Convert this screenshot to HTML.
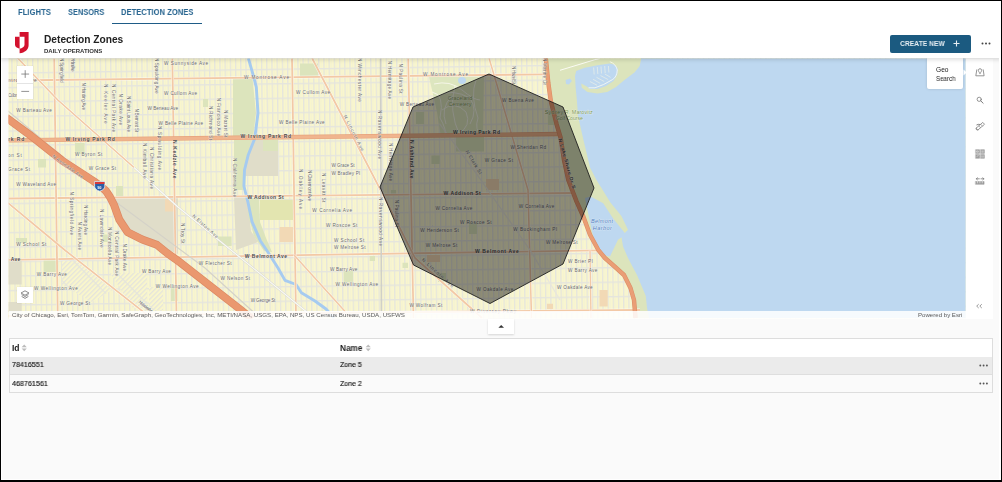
<!DOCTYPE html>
<html><head><meta charset="utf-8">
<style>
.t{will-change:transform;}
html,body{margin:0;padding:0;width:1002px;height:482px;overflow:hidden;background:#000;font-family:"Liberation Sans",sans-serif;}
.abs{position:absolute;}
#frame{position:absolute;left:1px;top:1px;width:1000px;height:479px;background:#fff;}
#content{position:absolute;left:2px;top:1px;width:997px;height:478px;background:#fafafa;overflow:hidden;}
.t{position:absolute;white-space:nowrap;transform-origin:0 0;line-height:1;}
#header{position:absolute;left:0;top:0;width:1002px;height:58px;background:#fff;box-shadow:0 2px 4px rgba(0,0,0,0.13);z-index:3;}
.tab{color:#286590;font-weight:bold;font-size:9px;}
#uline{position:absolute;left:112.4px;top:22.5px;width:89.6px;height:1.9px;background:#1f5c87;}
#btn{position:absolute;left:890px;top:34.7px;width:81px;height:18px;background:#1b5a80;border-radius:2px;}
#map{position:absolute;left:0;top:0;width:1002px;height:482px;z-index:1;}
#toolbar{position:absolute;left:965.5px;top:58.5px;width:27.5px;height:260px;background:#fff;z-index:2;}
#tip{position:absolute;left:927.2px;top:57.8px;width:36.3px;height:31.1px;background:#fff;border-radius:0 0 2px 2px;box-shadow:0 0 3px rgba(0,0,0,0.15);z-index:2;}
#tbl{position:absolute;left:9px;top:338.4px;width:983px;height:54px;border:0.8px solid #dcdcdc;background:#fafafa;box-sizing:border-box;z-index:2;}
.row{position:absolute;left:0;width:100%;}
.lbl text{font-family:"Liberation Sans",sans-serif;paint-order:stroke;stroke:rgba(255,255,255,0.55);stroke-width:0.7px;}
</style></head>
<body>
<div id="frame"></div>
<div style="position:absolute;left:0;top:0;width:1002px;height:482px;box-sizing:border-box;border-style:solid;border-color:#000;border-width:1px 1px 2px 1px;z-index:100;pointer-events:none"></div>
<div style="position:absolute;left:999px;top:0;width:2px;height:482px;background:#fff;z-index:99"></div>
<div style="position:absolute;left:0;top:479px;width:1002px;height:1px;background:#fff;z-index:99"></div>
<div id="content"></div>

<div id="header">
  <span class="t tab" style="left:17.6px;top:8.2px;transform:scaleX(0.855)">FLIGHTS</span>
  <span class="t tab" style="left:67.5px;top:8.2px;transform:scaleX(0.825)">SENSORS</span>
  <span class="t tab" style="left:120.8px;top:8.2px;transform:scaleX(0.847)">DETECTION ZONES</span>
  <div id="uline"></div>
  <svg class="abs" style="left:15.4px;top:32.4px" width="14" height="22" viewBox="0 0 14 22">
    <path fill="#d3112e" d="M4.6,0 H13.6 V13.2 C13.6,17.5 9.9,20.6 4.6,21.3 V16.7 C7.2,16.2 9.5,15 9.5,12.8 V4.7 H4.6 Z"/>
    <path fill="#d3112e" d="M0,4.7 H4.6 V16.7 C2,16.2 0,14.8 0,12.8 Z"/>
  </svg>
  <span class="t" style="left:44.1px;top:34.5px;font-size:10.2px;font-weight:bold;color:#222;">Detection Zones</span>
  <span class="t" style="left:44.1px;top:47.6px;font-size:6px;font-weight:bold;color:#333;">DAILY OPERATIONS</span>
  <div id="btn"></div>
  <span class="t" style="left:900.1px;top:39.8px;font-size:7.5px;font-weight:bold;color:#e6edf2;transform:scaleX(0.9)">CREATE NEW</span>
  <svg class="abs" style="left:952.5px;top:40px" width="7" height="7"><path d="M3.5,0.5V6.5M0.5,3.5H6.5" stroke="#e6edf2" stroke-width="1.1"/></svg>
  <svg class="abs" style="left:981px;top:42px" width="11" height="3"><circle cx="1.5" cy="1.4" r="1" fill="#444"/><circle cx="5" cy="1.4" r="1" fill="#444"/><circle cx="8.5" cy="1.4" r="1" fill="#444"/></svg>
</div>

<svg id="map" width="1002" height="482" viewBox="0 0 1002 482">
<defs>
<clipPath id="mc"><rect x="8.6" y="58.5" width="957" height="260"/></clipPath>
<pattern id="grid" patternUnits="userSpaceOnUse" width="5.2" height="14.5" patternTransform="rotate(-0.8)">
<rect x="0" y="0" width="1.3" height="14.5" fill="#e5e5dd"/><rect x="0" y="0" width="5.2" height="1.4" fill="#e5e5dd"/><rect x="3.1" y="1.4" width="0.45" height="13.1" fill="#efeed9"/>
</pattern>
<pattern id="dgrid" patternUnits="userSpaceOnUse" width="3.3" height="22" patternTransform="rotate(45)">
<rect x="0" y="0" width="3.3" height="22" fill="#f9f6cd"/><rect x="0" y="0" width="1.2" height="22" fill="#e4e4dc"/><rect x="0" y="0" width="3.3" height="1.2" fill="#e4e4dc"/>
</pattern>
</defs>
<g clip-path="url(#mc)">
<rect x="0" y="0" width="1002" height="482" fill="#f9f6cd"/>
<rect x="0" y="0" width="1002" height="482" fill="url(#grid)"/>
<polygon points="62.0,261.0 79.0,261.0 112.0,290.0 92.0,302.0 62.0,285.0" fill="url(#dgrid)"/>
<polygon points="110.0,273.0 147.0,273.0 147.0,308.0 133.0,308.0" fill="url(#dgrid)"/>
<polygon points="149.0,287.0 163.0,287.0 163.0,310.0 149.0,310.0" fill="url(#dgrid)"/>
<polygon points="110.0,197.0 178.0,197.0 178.0,254.0 153.0,243.5 136.7,236.6 125.7,227.0 117.5,213.4" fill="#e0ddc9"/>
<polygon points="245.0,140.0 278.0,140.0 278.0,176.0 245.0,176.0" fill="#e0ddc9"/>
<polygon points="8.0,258.5 21.7,258.5 21.7,284.5 8.0,284.5" fill="#e0ddc9"/>
<polygon points="8.0,302.0 21.7,302.0 21.7,312.0 8.0,312.0" fill="#e0ddc9"/>
<polygon points="234.0,197.0 247.5,197.0 251.0,231.0 258.0,242.0 236.0,250.0" fill="#e0ddc9"/>
<polygon points="170.0,208.0 175.5,208.0 175.5,249.0 170.0,249.0" fill="#e0ddc9"/>
<polygon points="233.0,78.5 252.5,78.5 256.0,113.0 253.0,137.4 233.0,137.4" fill="#dce4bc"/>
<polygon points="234.0,140.0 251.0,140.0 246.0,165.0 245.0,190.0 234.0,190.0" fill="#dce4bc"/>
<polygon points="300.0,63.5 318.0,63.5 318.0,76.6 300.0,76.6" fill="#dce4bc"/>
<polygon points="263.0,140.0 278.0,140.0 278.0,151.0 263.0,151.0" fill="#dce4bc"/>
<polygon points="75.0,143.0 84.6,143.0 84.6,154.0 75.0,154.0" fill="#dce4bc"/>
<polygon points="38.0,159.0 46.0,159.0 46.0,167.5 38.0,167.5" fill="#dce4bc"/>
<polygon points="43.6,260.0 58.6,260.0 58.6,272.0 43.6,272.0" fill="#dce4bc"/>
<polygon points="16.0,238.0 27.0,238.0 27.0,243.0 16.0,243.0" fill="#dce4bc"/>
<polygon points="116.0,186.0 123.0,186.0 123.0,197.0 116.0,197.0" fill="#dce4bc"/>
<polygon points="171.0,287.0 178.0,287.0 178.0,301.0 171.0,301.0" fill="#dce4bc"/>
<polygon points="218.0,236.6 231.6,236.6 231.6,246.0 218.0,246.0" fill="#dce4bc"/>
<polygon points="343.7,271.0 353.0,271.0 353.0,282.0 343.7,282.0" fill="#dce4bc"/>
<polygon points="369.7,256.0 375.0,256.0 375.0,261.0 369.7,261.0" fill="#dce4bc"/>
<polygon points="402.5,262.7 408.0,262.7 408.0,268.0 402.5,268.0" fill="#dce4bc"/>
<polygon points="203.0,99.0 208.0,99.0 208.0,107.0 203.0,107.0" fill="#dce4bc"/>
<polygon points="103.0,234.6 108.0,234.6 108.0,242.0 103.0,242.0" fill="#dce4bc"/>
<polygon points="416.0,112.0 424.0,112.0 424.0,124.0 416.0,124.0" fill="#dce4bc"/>
<polygon points="548.0,110.0 562.0,110.0 562.0,125.0 548.0,125.0" fill="#dce4bc"/>
<polygon points="469.0,222.0 477.0,222.0 477.0,234.0 469.0,234.0" fill="#dce4bc"/>
<polygon points="438.0,273.0 446.0,273.0 446.0,282.0 438.0,282.0" fill="#dce4bc"/>
<polygon points="391.0,190.0 396.0,190.0 396.0,195.0 391.0,195.0" fill="#dce4bc"/>
<polygon points="431.4,155.6 439.7,155.6 439.7,164.0 431.4,164.0" fill="#dce4bc"/>
<polygon points="456.0,137.0 484.0,137.0 484.0,151.4 456.0,151.4" fill="#dce4bc"/>
<polygon points="260.0,199.7 293.0,199.7 293.0,220.0 260.0,220.0" fill="#e3e5b0"/>
<polygon points="248.0,198.0 259.0,198.0 260.0,222.0 266.0,238.0 272.0,252.0 264.0,251.0 254.0,236.0 248.0,215.0" fill="#dce4bc"/>
<polygon points="165.0,199.0 175.4,199.0 175.4,211.5 165.0,211.5" fill="#f2d9b5"/>
<polygon points="486.0,179.0 499.0,179.0 499.0,190.0 486.0,190.0" fill="#f2d9b5"/>
<polygon points="279.5,227.0 293.0,227.0 293.0,242.0 279.5,242.0" fill="#f2d9b5"/>
<polygon points="599.5,290.0 607.7,290.0 607.7,306.5 599.5,306.5" fill="#f2d9b5"/>
<polygon points="547.0,303.7 553.0,303.7 553.0,309.0 547.0,309.0" fill="#f2d9b5"/>
<polygon points="427.0,255.0 440.0,255.0 440.0,262.0 427.0,262.0" fill="#f2d9b5"/>
<polygon points="429.0,77.0 484.0,76.2 483.0,137.0 441.0,137.5 437.0,112.0" fill="#dde6bf"/>
<path d="M434,84 Q450,80 462,90 T480,100" stroke="#f7f7ec" stroke-width="0.9" fill="none"/>
<path d="M438,96 Q452,88 470,98 Q478,110 470,124" stroke="#f7f7ec" stroke-width="0.9" fill="none"/>
<path d="M442,110 Q455,100 466,112 Q472,126 458,134" stroke="#f7f7ec" stroke-width="0.9" fill="none"/>
<path d="M446,124 Q440,108 452,96" stroke="#f7f7ec" stroke-width="0.9" fill="none"/>
<path d="M476,80 Q470,96 478,118 Q474,130 482,136" stroke="#f7f7ec" stroke-width="0.9" fill="none"/>
<path d="M455,86 Q448,110 460,136" stroke="#f7f7ec" stroke-width="0.9" fill="none"/>
<path d="M432,92 Q445,94 440,118 Q447,130 445,137" stroke="#f7f7ec" stroke-width="0.9" fill="none"/>
<polygon points="545.8,58.0 548.3,82.9 550.8,101.0 556.6,124.3 560.7,138.0 564.0,160.0 568.3,180.0 576.6,201.6 583.3,216.5 590.0,234.8 598.2,249.8 604.9,258.0 614.0,266.0 624.0,275.0 630.5,288.0 634.0,300.0 635.5,318.0 670.0,318.0 670.0,58.0" fill="#dce4bc"/>
<polygon points="641.0,58.0 966.0,58.0 966.0,318.0 649.0,318.0 647.0,308.0 645.8,296.0 637.0,275.0 632.7,267.0 628.0,258.0 623.0,246.4 621.5,237.3 618.0,239.8 610.0,256.4 602.4,254.8 595.7,246.4 591.6,229.8 585.0,198.0 590.7,196.6 603.2,203.3 613.0,218.2 624.8,233.0 628.0,229.8 621.4,216.0 610.4,202.4 596.5,180.0 590.0,167.5 583.0,138.0 578.0,116.0 576.8,99.6 575.6,87.1 575.0,76.0 576.2,71.0 584.9,67.8 597.4,65.3 609.8,63.5 614.8,64.7 617.9,68.5 617.3,74.7 613.5,80.9 606.0,85.9 597.4,89.0 589.9,89.0 586.8,86.5 581.2,83.4 581.8,87.8 587.4,92.1 597.4,93.4 607.3,92.1 616.0,87.1 624.8,79.7 634.7,72.2 639.7,66.0 641.0,59.7" fill="#bed8f0"/>
<polygon points="565.6,80.0 570.0,78.4 571.8,81.0 569.0,84.6 566.0,84.0" fill="#bed8f0"/>
<ellipse cx="462" cy="80.5" rx="4" ry="3.5" fill="#bed8f0"/>
<line x1="593.6" y1="67.5" x2="594.2" y2="74.5" stroke="#f4f4e6" stroke-width="0.6"/>
<line x1="597.3" y1="67" x2="597.8" y2="74" stroke="#f4f4e6" stroke-width="0.6"/>
<line x1="601" y1="66.5" x2="601.5" y2="73.5" stroke="#f4f4e6" stroke-width="0.6"/>
<line x1="604.7" y1="66" x2="605.2" y2="73" stroke="#f4f4e6" stroke-width="0.6"/>
<line x1="608.4" y1="66" x2="608.9" y2="72.5" stroke="#f4f4e6" stroke-width="0.6"/>
<line x1="589.9" y1="81.5" x2="597" y2="85.2" stroke="#f4f4e6" stroke-width="0.6"/>
<line x1="593" y1="79.3" x2="600.2" y2="83.3" stroke="#f4f4e6" stroke-width="0.6"/>
<line x1="596.5" y1="77.3" x2="604.2" y2="81.5" stroke="#f4f4e6" stroke-width="0.6"/>
<line x1="600.5" y1="75.6" x2="608.2" y2="79.6" stroke="#f4f4e6" stroke-width="0.6"/>
<line x1="604.8" y1="74" x2="610.5" y2="77.3" stroke="#f4f4e6" stroke-width="0.6"/>
<path d="M560,70.3 L594.9,59.7 L600,58.5" stroke="#fbfbf4" stroke-width="1" fill="none"/>
<path d="M609.8,61.6 Q616,64 617.3,70 Q617,77 612.3,79.7 Q603.6,85.3 594.9,87.8 L588.6,87.8" stroke="#fbfbf4" stroke-width="0.8" fill="none"/>
<path d="M248.3,58.2 L253.0,74.3 L256.3,87.2 L258.0,113.0 L254.7,138.7 L248.3,154.7 L244.5,170.0 L243.9,186.0 L248.0,202.4 L252.0,221.6 L260.3,240.7 L268.5,253.0 L278.0,268.0 L285.0,280.4 L296.0,284.5 L301.4,292.8 L315.0,301.0 L326.0,309.0 L334.0,318.0" stroke="#a6cbf0" stroke-width="2.9" fill="none" stroke-linejoin="round"/>
<path d="M8.6,80.5 L548.0,74.3" stroke="#fff" stroke-width="2.8" fill="none" opacity="0.7"/>
<path d="M8.6,80.5 L548.0,74.3" stroke="#f3c9a6" stroke-width="1.8" fill="none"/>
<path d="M8.6,198.5 L575.0,193.0" stroke="#fff" stroke-width="2.8" fill="none" opacity="0.7"/>
<path d="M8.6,198.5 L575.0,193.0" stroke="#f3c9a6" stroke-width="1.8" fill="none"/>
<path d="M8.6,259.8 L600.0,250.3" stroke="#fff" stroke-width="2.8" fill="none" opacity="0.7"/>
<path d="M8.6,259.8 L600.0,250.3" stroke="#f3c9a6" stroke-width="1.8" fill="none"/>
<path d="M8.6,316.0 L640.0,310.0" stroke="#fff" stroke-width="2.8" fill="none" opacity="0.7"/>
<path d="M8.6,316.0 L640.0,310.0" stroke="#f3c9a6" stroke-width="1.8" fill="none"/>
<path d="M54.2,58.5 L57.8,318.0" stroke="#fff" stroke-width="2.8" fill="none" opacity="0.7"/>
<path d="M54.2,58.5 L57.8,318.0" stroke="#f3c9a6" stroke-width="1.8" fill="none"/>
<path d="M172.3,58.5 L176.5,318.0" stroke="#fff" stroke-width="2.8" fill="none" opacity="0.7"/>
<path d="M172.3,58.5 L176.5,318.0" stroke="#f3c9a6" stroke-width="1.8" fill="none"/>
<path d="M292.0,58.5 L296.0,318.0" stroke="#fff" stroke-width="2.8" fill="none" opacity="0.7"/>
<path d="M292.0,58.5 L296.0,318.0" stroke="#f3c9a6" stroke-width="1.8" fill="none"/>
<path d="M408.2,58.5 L413.5,318.0" stroke="#fff" stroke-width="2.8" fill="none" opacity="0.7"/>
<path d="M408.2,58.5 L413.5,318.0" stroke="#f3c9a6" stroke-width="1.8" fill="none"/>
<path d="M489.0,58.0 L528.0,190.0 L531.5,318.0" stroke="#fff" stroke-width="2.6" fill="none" opacity="0.7"/>
<path d="M489.0,58.0 L528.0,190.0 L531.5,318.0" stroke="#f3c9a6" stroke-width="1.6" fill="none"/>
<path d="M590.0,250.0 L591.0,318.0" stroke="#fff" stroke-width="2.4" fill="none" opacity="0.7"/>
<path d="M590.0,250.0 L591.0,318.0" stroke="#f3c9a6" stroke-width="1.4" fill="none"/>
<path d="M17.5,58.0 L57.8,100.0 L134.0,167.5" stroke="#fff" stroke-width="2.6" fill="none" opacity="0.7"/>
<path d="M17.5,58.0 L57.8,100.0 L134.0,167.5" stroke="#f3c9a6" stroke-width="1.6" fill="none"/>
<path d="M134.0,167.5 L178.0,207.0 L260.0,273.6 L314.0,318.0" stroke="#d8d8d0" stroke-width="2.0" fill="none"/>
<path d="M134.0,167.5 L178.0,207.0 L260.0,273.6 L314.0,318.0" stroke="#fbfbf6" stroke-width="1.1" fill="none"/>
<path d="M8.0,203.0 L64.7,250.0 L141.8,310.6 L151.0,318.0" stroke="#fff" stroke-width="2.7" fill="none" opacity="0.7"/>
<path d="M8.0,203.0 L64.7,250.0 L141.8,310.6 L151.0,318.0" stroke="#f3c9a6" stroke-width="1.7" fill="none"/>
<path d="M312.0,58.0 L379.0,187.0 L415.0,258.0 L472.0,309.0 L482.0,318.0" stroke="#fff" stroke-width="2.8" fill="none" opacity="0.7"/>
<path d="M312.0,58.0 L379.0,187.0 L415.0,258.0 L472.0,309.0 L482.0,318.0" stroke="#f3c9a6" stroke-width="1.8" fill="none"/>
<path d="M294.0,255.0 L351.0,318.0" stroke="#fff" stroke-width="2.6" fill="none" opacity="0.7"/>
<path d="M294.0,255.0 L351.0,318.0" stroke="#f3c9a6" stroke-width="1.6" fill="none"/>
<path d="M8.0,111.0 L120.0,205.0 L205.0,268.0 L260.0,318.0" stroke="#d5d3c8" stroke-width="1.2" fill="none"/>
<path d="M380.5,58.5 L381.5,318" stroke="#d0d0c8" stroke-width="1.6" fill="none"/>
<path d="M439.5,123.7 L477.8,175.7 L530,250 L560,300" stroke="#e8e6dc" stroke-width="1.3" fill="none"/>
<path d="M8.6,140.4 L560,134" stroke="#e6a27a" stroke-width="4.4" fill="none"/>
<path d="M8.6,140.4 L560,134" stroke="#f0b58e" stroke-width="3.2" fill="none"/>
<path d="M6.0,117.5 L31.0,135.8 L62.3,160.7 L93.4,181.0 L101.0,186.5 L106.0,191.0 L110.0,197.0 L114.2,205.3 L119.4,219.8 L127.7,232.2 L142.2,239.5 L156.8,244.7 L167.0,253.0 L180.0,262.3 L241.0,310.0 L252.0,319.0" stroke="#dc8a64" stroke-width="7.9" fill="none" stroke-linejoin="round"/>
<path d="M6.0,117.5 L31.0,135.8 L62.3,160.7 L93.4,181.0 L101.0,186.5 L106.0,191.0 L110.0,197.0 L114.2,205.3 L119.4,219.8 L127.7,232.2 L142.2,239.5 L156.8,244.7 L167.0,253.0 L180.0,262.3 L241.0,310.0 L252.0,319.0" stroke="#ea9870" stroke-width="6.5" fill="none" stroke-linejoin="round"/>
<path d="M545.8,58.0 L548.3,82.9 L550.8,101.0 L556.6,124.3 L560.7,138.0 L564.0,160.0 L568.3,180.0 L576.6,201.6 L583.3,216.5 L590.0,234.8 L598.2,249.8 L604.9,258.0 L614.0,266.0 L624.0,275.0 L630.5,288.0 L634.0,300.0 L635.5,318.0" stroke="#dc8f66" stroke-width="4.4" fill="none" stroke-linejoin="round"/>
<path d="M545.8,58.0 L548.3,82.9 L550.8,101.0 L556.6,124.3 L560.7,138.0 L564.0,160.0 L568.3,180.0 L576.6,201.6 L583.3,216.5 L590.0,234.8 L598.2,249.8 L604.9,258.0 L614.0,266.0 L624.0,275.0 L630.5,288.0 L634.0,300.0 L635.5,318.0" stroke="#ea9e76" stroke-width="3.2" fill="none" stroke-linejoin="round"/>
<path d="M94.6,181.6 h10.2 v4.6 q0,3.6 -5.1,5 q-5.1,-1.4 -5.1,-5 z" fill="#2b5ea7" stroke="#fff" stroke-width="0.7"/>
<path d="M94.9,181.9 h9.6 v2.2 h-9.6 z" fill="#d83a3a"/>
<text x="97.3" y="189" font-size="3.6" font-weight="bold" fill="#fff" font-family="Liberation Sans">90</text>

<g class="lbl" opacity="0.98"><text x="8" y="141.0" textLength="16.4" lengthAdjust="spacing" fill="#474747" font-weight="bold" font-size="5.0">rk Rd</text>
<text x="65.5" y="141.0" textLength="49.3" lengthAdjust="spacing" fill="#474747" font-weight="bold" font-size="5.0">W Irving Park Rd</text>
<text x="75" y="156.1" textLength="27.4" lengthAdjust="spacing" fill="#666" font-size="4.7">W Byron St</text>
<text x="88.8" y="170.0" textLength="27.2" lengthAdjust="spacing" fill="#666" font-size="4.7">W Grace St</text>
<text x="16.2" y="186.39999999999998" textLength="39.8" lengthAdjust="spacing" fill="#666" font-size="4.7">W Waveland Ave</text>
<text x="8" y="171.39999999999998" textLength="22.0" lengthAdjust="spacing" fill="#666" font-size="4.7">Grace St</text>
<text x="8" y="156.7" textLength="13.7" lengthAdjust="spacing" fill="#666" font-size="4.7">on St</text>
<text x="16.2" y="111.7" textLength="35.6" lengthAdjust="spacing" fill="#666" font-size="4.7">W Barteau Ave</text>
<text x="147.6" y="109.7" textLength="30.4" lengthAdjust="spacing" fill="#666" font-size="4.7">W Berteau Ave</text>
<text x="158.6" y="124.7" textLength="44.4" lengthAdjust="spacing" fill="#666" font-size="4.7">W Belle Plaine Ave</text>
<text x="164" y="94.7" textLength="33.0" lengthAdjust="spacing" fill="#666" font-size="4.7">W Cullom Ave</text>
<text x="164" y="64.7" textLength="44.0" lengthAdjust="spacing" fill="#666" font-size="4.7">W Sunnyside Ave</text>
<text x="8" y="82.4" textLength="28.7" lengthAdjust="spacing" fill="#666" font-size="4.7">ntrose Ave</text>
<text x="8" y="97.2" textLength="11.0" lengthAdjust="spacing" fill="#666" font-size="4.7">Cullom</text>
<text x="244" y="79.4" textLength="45.0" lengthAdjust="spacing" fill="#666" font-size="4.7">W Montrose Ave</text>
<text x="296" y="93.7" textLength="34.0" lengthAdjust="spacing" fill="#666" font-size="4.7">W Cullom Ave</text>
<text x="279" y="123.5" textLength="45.7" lengthAdjust="spacing" fill="#666" font-size="4.7">W Belle Plaine Ave</text>
<text x="240.6" y="138.29999999999998" textLength="50.4" lengthAdjust="spacing" fill="#474747" font-weight="bold" font-size="5.0">W Irving Park Rd</text>
<text x="331.5" y="167.29999999999998" textLength="23.1" lengthAdjust="spacing" fill="#666" font-size="4.7">W Grace St</text>
<text x="331.5" y="175.2" textLength="28.5" lengthAdjust="spacing" fill="#666" font-size="4.7">W Bradley Pl</text>
<text x="423" y="76.10000000000001" textLength="45.0" lengthAdjust="spacing" fill="#666" font-size="4.7">W Montrose Ave</text>
<text x="399.8" y="106.2" textLength="34.2" lengthAdjust="spacing" fill="#666" font-size="4.7">W Berteau Ave</text>
<text x="453" y="134.39999999999998" textLength="47.0" lengthAdjust="spacing" fill="#474747" font-weight="bold" font-size="5.0">W Irving Park Rd</text>
<text x="502" y="102.10000000000001" textLength="31.8" lengthAdjust="spacing" fill="#666" font-size="4.7">W Buena Ave</text>
<text x="510.5" y="148.7" textLength="35.5" lengthAdjust="spacing" fill="#666" font-size="4.7">W Sheridan Rd</text>
<text x="484.7" y="162.39999999999998" textLength="28.3" lengthAdjust="spacing" fill="#666" font-size="4.7">W Grace St</text>
<text x="16.2" y="245.7" textLength="30.1" lengthAdjust="spacing" fill="#666" font-size="4.7">W School St</text>
<text x="10.7" y="261.09999999999997" textLength="9.6" lengthAdjust="spacing" fill="#474747" font-weight="bold" font-size="5.0">Ave</text>
<text x="36.7" y="275.59999999999997" textLength="30.2" lengthAdjust="spacing" fill="#666" font-size="4.7">W Barry Ave</text>
<text x="34" y="290.09999999999997" textLength="43.8" lengthAdjust="spacing" fill="#666" font-size="4.7">W Wellington Ave</text>
<text x="60" y="304.59999999999997" textLength="30.0" lengthAdjust="spacing" fill="#666" font-size="4.7">W George St</text>
<text x="142" y="273.4" textLength="28.9" lengthAdjust="spacing" fill="#666" font-size="4.7">W Barry Ave</text>
<text x="155.8" y="288.2" textLength="42.9" lengthAdjust="spacing" fill="#666" font-size="4.7">W Wellington Ave</text>
<text x="247.5" y="198.7" textLength="36.1" lengthAdjust="spacing" fill="#474747" font-weight="bold" font-size="5.0">W Addison St</text>
<text x="244.7" y="257.5" textLength="42.3" lengthAdjust="spacing" fill="#474747" font-weight="bold" font-size="5.0">W Belmont Ave</text>
<text x="312.3" y="211.7" textLength="39.7" lengthAdjust="spacing" fill="#666" font-size="4.7">W Cornelia Ave</text>
<text x="326" y="226.7" textLength="31.4" lengthAdjust="spacing" fill="#666" font-size="4.7">W Roscoe St</text>
<text x="198.7" y="264.9" textLength="32.9" lengthAdjust="spacing" fill="#666" font-size="4.7">W Fletcher St</text>
<text x="220.6" y="279.7" textLength="29.4" lengthAdjust="spacing" fill="#666" font-size="4.7">W Nelson St</text>
<text x="250.8" y="301.7" textLength="24.6" lengthAdjust="spacing" fill="#666" font-size="4.7">W George St</text>
<text x="443.6" y="194.5" textLength="37.0" lengthAdjust="spacing" fill="#474747" font-weight="bold" font-size="5.0">W Addison St</text>
<text x="435.4" y="209.7" textLength="36.9" lengthAdjust="spacing" fill="#666" font-size="4.7">W Cornelia Ave</text>
<text x="460" y="224.1" textLength="31.5" lengthAdjust="spacing" fill="#666" font-size="4.7">W Roscoe St</text>
<text x="420.3" y="232.0" textLength="38.4" lengthAdjust="spacing" fill="#666" font-size="4.7">W Henderson St</text>
<text x="425.8" y="247.1" textLength="31.5" lengthAdjust="spacing" fill="#666" font-size="4.7">W Melrose St</text>
<text x="475" y="253.2" textLength="43.7" lengthAdjust="spacing" fill="#474747" font-weight="bold" font-size="5.0">W Belmont Ave</text>
<text x="476.5" y="290.7" textLength="36.8" lengthAdjust="spacing" fill="#666" font-size="4.7">W Oakdale Ave</text>
<text x="334" y="241.7" textLength="30.2" lengthAdjust="spacing" fill="#666" font-size="4.7">W School St</text>
<text x="334" y="248.5" textLength="31.6" lengthAdjust="spacing" fill="#666" font-size="4.7">W Melrose St</text>
<text x="330" y="271.2" textLength="27.4" lengthAdjust="spacing" fill="#666" font-size="4.7">W Barry Ave</text>
<text x="335.5" y="285.7" textLength="42.5" lengthAdjust="spacing" fill="#666" font-size="4.7">W Wellington Ave</text>
<text x="409.4" y="306.7" textLength="32.8" lengthAdjust="spacing" fill="#666" font-size="4.7">W Wolfram St</text>
<text x="518.7" y="207.7" textLength="35.6" lengthAdjust="spacing" fill="#666" font-size="4.7">W Cornelia Ave</text>
<text x="513.3" y="230.7" textLength="43.7" lengthAdjust="spacing" fill="#666" font-size="4.7">W Buckingham Pl</text>
<text x="546" y="243.7" textLength="31.6" lengthAdjust="spacing" fill="#666" font-size="4.7">W Melrose St</text>
<text x="568" y="263.0" textLength="24.7" lengthAdjust="spacing" fill="#666" font-size="4.7">W Brier Pl</text>
<text x="568" y="272.0" textLength="29.3" lengthAdjust="spacing" fill="#666" font-size="4.7">W Barry Ave</text>
<text x="557" y="289.0" textLength="35.7" lengthAdjust="spacing" fill="#666" font-size="4.7">W Oakdale Ave</text>
<text x="447.7" y="100.2" textLength="24.6" lengthAdjust="spacing" fill="#7d9a52" font-size="5.4">Graceland</text>
<text x="448.5" y="106.2" textLength="23.0" lengthAdjust="spacing" fill="#7d9a52" font-size="5.4">Cemetery</text>
<text x="544.8" y="113.60000000000001" textLength="47.9" lengthAdjust="spacing" fill="#7d9a52" font-size="5.4">Sydney R. Marovitz</text>
<text x="555.7" y="119.9" textLength="27.3" lengthAdjust="spacing" fill="#7d9a52" font-size="5.4">Golf Course</text>
<text x="591" y="222.7" textLength="22.0" lengthAdjust="spacing" fill="#4f7cc0" font-style="italic" font-size="5.6">Belmont</text>
<text x="470" y="313.2" textLength="46.0" lengthAdjust="spacing" fill="#666" font-size="4.7">W Diversey Pkwy</text>
<text x="592.7" y="230.1" textLength="19.1" lengthAdjust="spacing" fill="#4f7cc0" font-style="italic" font-size="5.6">Harbor</text>
<text transform="translate(81.6,82.6) rotate(90)" textLength="27.4" lengthAdjust="spacing" fill="#666" font-size="4.7">N Harding Ave</text>
<text transform="translate(103.5,84) rotate(90)" textLength="39.7" lengthAdjust="spacing" fill="#666" font-size="4.7">N Keeler Ave</text>
<text transform="translate(111.7,84) rotate(90)" textLength="48.0" lengthAdjust="spacing" fill="#666" font-size="4.7">N Central Park Ave</text>
<text transform="translate(119.3,93.6) rotate(90)" textLength="31.4" lengthAdjust="spacing" fill="#666" font-size="4.7">N Drake Ave</text>
<text transform="translate(126.7,96) rotate(90)" textLength="36.0" lengthAdjust="spacing" fill="#666" font-size="4.7">N Saint Louis Ave</text>
<text transform="translate(135.0,108.6) rotate(90)" textLength="23.4" lengthAdjust="spacing" fill="#666" font-size="4.7">N Bernard St</text>
<text transform="translate(155.3,58) rotate(90)" textLength="35.6" lengthAdjust="spacing" fill="#666" font-size="4.7">N Spaulding Ave</text>
<text transform="translate(158.3,126) rotate(90)" textLength="44.0" lengthAdjust="spacing" fill="#666" font-size="4.7">N Spaulding Ave</text>
<text transform="translate(143.3,143) rotate(90)" textLength="35.5" lengthAdjust="spacing" fill="#666" font-size="4.7">N Kimball Ave</text>
<text transform="translate(150.0,147) rotate(90)" textLength="42.0" lengthAdjust="spacing" fill="#666" font-size="4.7">N Christiana Ave</text>
<text transform="translate(173.3,140) rotate(90)" textLength="38.5" lengthAdjust="spacing" fill="#474747" font-weight="bold" font-size="5.0">N Kedzie Ave</text>
<text transform="translate(70.6,58) rotate(90)" textLength="13.7" lengthAdjust="spacing" fill="#666" font-size="4.7">N Hamlin Ave</text>
<text transform="translate(59.699999999999996,58) rotate(90)" textLength="24.6" lengthAdjust="spacing" fill="#666" font-size="4.7">N Springfield</text>
<text transform="translate(217.0,97.7) rotate(90)" textLength="38.3" lengthAdjust="spacing" fill="#666" font-size="4.7">N Francisco Ave</text>
<text transform="translate(209.3,106) rotate(90)" textLength="34.0" lengthAdjust="spacing" fill="#666" font-size="4.7">N Richmond St</text>
<text transform="translate(224.3,110) rotate(90)" textLength="27.4" lengthAdjust="spacing" fill="#666" font-size="4.7">N Mozart St</text>
<text transform="translate(232.60000000000002,158) rotate(90)" textLength="39.0" lengthAdjust="spacing" fill="#666" font-size="4.7">N California Ave</text>
<text transform="translate(299.1,169) rotate(90)" textLength="40.0" lengthAdjust="spacing" fill="#666" font-size="4.7">N Oakley Ave</text>
<text transform="translate(307.6,170) rotate(90)" textLength="31.0" lengthAdjust="spacing" fill="#666" font-size="4.7">N Claremont Ave</text>
<text transform="translate(322.3,173) rotate(90)" textLength="29.4" lengthAdjust="spacing" fill="#666" font-size="4.7">N Leavitt St</text>
<text transform="translate(377.6,110) rotate(90)" textLength="49.0" lengthAdjust="spacing" fill="#666" font-size="4.7">N Ravenswood Ave</text>
<text transform="translate(409.6,140) rotate(90)" textLength="38.5" lengthAdjust="spacing" fill="#474747" font-weight="bold" font-size="5.0">N Ashland Ave</text>
<text transform="translate(388.3,60.7) rotate(90)" textLength="38.3" lengthAdjust="spacing" fill="#666" font-size="4.7">N Hermitage Ave</text>
<text transform="translate(399.3,63.5) rotate(90)" textLength="30.1" lengthAdjust="spacing" fill="#666" font-size="4.7">N Paulina St</text>
<text transform="translate(358.3,58) rotate(90)" textLength="43.8" lengthAdjust="spacing" fill="#666" font-size="4.7">N Winchester Ave</text>
<text transform="translate(388.5,143) rotate(90)" textLength="38.0" lengthAdjust="spacing" fill="#666" font-size="4.7">N Hermitage Ave</text>
<text transform="translate(543.0,58) rotate(90)" textLength="27.0" lengthAdjust="spacing" fill="#666" font-size="4.7">N Marine Dr</text>
<text transform="translate(511.59999999999997,66) rotate(90)" textLength="18.0" lengthAdjust="spacing" fill="#666" font-size="4.7">N Hazel St</text>
<text transform="translate(70.1,191.5) rotate(90)" textLength="43.5" lengthAdjust="spacing" fill="#666" font-size="4.7">N Springfield Ave</text>
<text transform="translate(84.3,205) rotate(90)" textLength="30.0" lengthAdjust="spacing" fill="#666" font-size="4.7">N Harding Ave</text>
<text transform="translate(78.0,221.6) rotate(90)" textLength="28.4" lengthAdjust="spacing" fill="#666" font-size="4.7">N Avers Ave</text>
<text transform="translate(99.89999999999999,209) rotate(90)" textLength="38.6" lengthAdjust="spacing" fill="#666" font-size="4.7">N Lawndale Ave</text>
<text transform="translate(107.6,227) rotate(90)" textLength="38.0" lengthAdjust="spacing" fill="#666" font-size="4.7">N Monticello Ave</text>
<text transform="translate(115.3,231) rotate(90)" textLength="45.0" lengthAdjust="spacing" fill="#666" font-size="4.7">N Central Park Ave</text>
<text transform="translate(123.3,243.5) rotate(90)" textLength="27.5" lengthAdjust="spacing" fill="#666" font-size="4.7">N Drake Ave</text>
<text transform="translate(181.3,223) rotate(90)" textLength="20.5" lengthAdjust="spacing" fill="#666" font-size="4.7">N Troy St</text>
<text transform="translate(378.90000000000003,197) rotate(90)" textLength="49.2" lengthAdjust="spacing" fill="#666" font-size="4.7">N Ravenswood Ave</text>
<text transform="translate(395.3,199.7) rotate(90)" textLength="27.3" lengthAdjust="spacing" fill="#666" font-size="4.7">N Paulina St</text>
<text transform="translate(51.9,157) rotate(35.9)" textLength="37.2" lengthAdjust="spacing" fill="#666" font-size="4.7">N Avondale Ave</text>
<text transform="translate(343.5,116) rotate(63.0)" textLength="39.7" lengthAdjust="spacing" fill="#666" font-size="4.7">N Lincoln Ave</text>
<text transform="translate(465.5,151.4) rotate(59.0)" textLength="27.2" lengthAdjust="spacing" fill="#666" font-size="4.7">N Clark St</text>
<text transform="translate(558.5,139) rotate(74.6)" textLength="51.9" lengthAdjust="spacing" fill="#474747" font-weight="bold" font-size="5.0">N Lake Shore Dr S</text>
<text transform="translate(192.0,216.5) rotate(41.8)" textLength="32.9" lengthAdjust="spacing" fill="#666" font-size="4.7">N Elston Ave</text>
<text transform="translate(421.5,260.3) rotate(42.0)" textLength="40.9" lengthAdjust="spacing" fill="#666" font-size="4.7">N Lincoln Ave</text>
<text transform="translate(138.2,302.7) rotate(37.8)" textLength="16.8" lengthAdjust="spacing" fill="#666" font-size="4.7">N Milwaukee Ave</text></g>

<polygon points="489,74 563,107 594,188 563,264 490,303.5 413.5,265 380,187 413,107" fill="rgba(0,0,0,0.43)" stroke="#1e1e1e" stroke-width="0.9" stroke-linejoin="round"/>
</g>
</svg>

<div id="toolbar"></div>
<div id="tip"></div>


<!-- map overlays -->
<div class="abs" style="left:16.8px;top:66.1px;width:16.4px;height:32.6px;background:#fff;z-index:2;box-shadow:0 0 1px rgba(0,0,0,0.15)"></div>
<div class="abs" style="left:16.8px;top:82.9px;width:16.4px;height:0.6px;background:#e4e4e4;z-index:2"></div>
<svg class="abs" style="left:16.8px;top:66.1px;z-index:2" width="17" height="33" viewBox="0 0 17 33"><path d="M8.2,4.2V11.9M4.3,8.05H12.1M4.3,25.4H12.1" stroke="#6e6e6e" stroke-width="0.75" fill="none"/></svg>
<div class="abs" style="left:17px;top:286.7px;width:16px;height:16.2px;background:#fff;z-index:2;box-shadow:0 0 1px rgba(0,0,0,0.15)"></div>
<svg class="abs" style="left:17px;top:286.7px;z-index:2" width="16" height="16" viewBox="0 0 16 16"><path d="M8,3.8 L12,6 L8,8.2 L4,6 Z" stroke="#6e6e6e" stroke-width="0.8" fill="none" stroke-linejoin="round"/><path d="M4.6,7.6 L8,9.5 L11.4,7.6 M4.6,9.4 L8,11.4 L11.4,9.4" stroke="#6e6e6e" stroke-width="0.8" fill="none"/></svg>
<div class="abs" style="left:8.6px;top:310.5px;width:957px;height:8px;background:rgba(255,255,255,0.86);z-index:2"></div>
<span class="t" style="left:11.6px;top:311.9px;font-size:6.17px;color:#5a5a5a;z-index:2">City of Chicago, Esri, TomTom, Garmin, SafeGraph, GeoTechnologies, Inc, METI/NASA, USGS, EPA, NPS, US Census Bureau, USDA, USFWS</span>
<span class="t" style="left:917.6px;top:311.9px;font-size:6.1px;color:#5a5a5a;z-index:2;transform:scaleX(0.99)">Powered by Esri</span>
<!-- toolbar -->
<svg class="abs" style="left:965.5px;top:58.5px;z-index:3" width="28" height="260" viewBox="965.5 58.5 28 260">
<g stroke="#7a7a7a" stroke-width="0.8" fill="none" stroke-linejoin="round" stroke-linecap="round">
<path d="M976.3,69.3 L975.3,75.3 L983.6,75.3 L982.7,69.3"/>
<path d="M979.5,72.8 C978.2,71.3 977.9,70.6 977.9,69.8 A1.6,1.6 0 0 1 981.1,69.8 C981.1,70.6 980.8,71.3 979.5,72.8 Z"/>
<circle cx="978.7" cy="98.8" r="2.1"/>
<path d="M980.1,100.2 L982.6,102.7" stroke-width="1"/>
<path d="M975.8,127.5 L982.3,121.9 L984,123.8 L977.5,129.4 Z" stroke-width="0.75"/>
<path d="M975.8,127.5 Q974.9,129.9 977.5,129.4" stroke-width="0.75"/>
<path d="M978.3,125.4 L980,127.2 M980.2,123.8 L981.9,125.6" stroke-width="0.6"/>
<path d="M976.3,124.3 Q977.6,123.4 979.2,123.9" stroke-width="0.9"/>
<rect x="975.3" y="149.2" width="3.7" height="3.7" fill="#a0a0a0" stroke="#8a8a8a" stroke-width="0.4"/>
<rect x="980.2" y="149.2" width="3.7" height="3.7" fill="#a0a0a0" stroke="#8a8a8a" stroke-width="0.4"/>
<rect x="975.3" y="154.1" width="3.7" height="3.7" fill="#a0a0a0" stroke="#8a8a8a" stroke-width="0.4"/>
<rect x="980.2" y="154.1" width="3.7" height="3.7" fill="#a0a0a0" stroke="#8a8a8a" stroke-width="0.4"/>
<path d="M976.5,150.4 h1.3 v1.3 h-1.3z M981.3,150.5 h1.5 M981.3,151.6 h1.5 M976.5,155.8 l1.3,-0.8 M981.4,155.3 v1.5 M982.7,155.3 v1.5" stroke="#fff" stroke-width="0.45"/>
<path d="M975.8,178.3 H978.8 M980.5,178.3 H983.4 M976.9,177.3 L975.8,178.3 L976.9,179.3 M982.3,177.3 L983.4,178.3 L982.3,179.3" stroke-width="0.8"/>
<rect x="975.2" y="181" width="8.4" height="2.8" fill="#a0a0a0" stroke="#8a8a8a" stroke-width="0.4"/>
<path d="M977,181 v1.4 M979.4,181 v1.4 M981.8,181 v1.4" stroke="#fff" stroke-width="0.5"/>
<path d="M978.2,303.7 L976.2,305.6 L978.2,307.5 M981.3,303.7 L979.3,305.6 L981.3,307.5" stroke="#555" stroke-width="0.6" stroke-linecap="butt"/>
</g></svg>
<span class="t" style="left:935.9px;top:67px;font-size:6.6px;color:#222;z-index:5">Geo</span>
<span class="t" style="left:935.9px;top:75.7px;font-size:6.6px;color:#222;z-index:5;transform:scaleX(0.93)">Search</span>
<svg class="abs" style="left:962.5px;top:68.5px;z-index:5" width="5" height="7"><path d="M0.5,0.5 L3.6,3.5 L0.5,6.5 Z" fill="#fff"/></svg>
<!-- toggle -->
<div class="abs" style="left:487.8px;top:318.7px;width:25.9px;height:15.5px;background:#fff;box-shadow:0 1px 2px rgba(0,0,0,0.15);z-index:3"></div>
<svg class="abs" style="left:497px;top:323px;z-index:3" width="9" height="6"><path d="M1.4,4.8 L4.2,1.9 L7,4.8 Z" fill="#333"/></svg>

<div class="abs" style="left:9.2px;top:338.2px;width:983.8px;height:54.9px;box-sizing:border-box;border:0.8px solid #dddddd;background:#fafafa;z-index:2;overflow:hidden">
 <div class="abs" style="left:0;top:0;width:100%;height:17.5px;background:#fff;border-bottom:0.6px solid #e6e6e6"></div>
 <div class="abs" style="left:0;top:18.1px;width:100%;height:16.9px;background:#ebebeb;border-bottom:0.6px solid #dedede"></div>
</div>
<span class="t" style="left:12.1px;top:343.9px;font-size:8.5px;font-weight:bold;color:#222;z-index:3">Id</span>
<svg class="abs" style="left:21px;top:344px;z-index:3" width="7" height="8"><path d="M0.6,3.3 L3.2,0.6 L5.8,3.3Z M0.6,4.5 L3.2,7.2 L5.8,4.5Z" fill="#bcbcbc"/></svg>
<span class="t" style="left:339.9px;top:343.9px;font-size:8.5px;font-weight:bold;color:#222;z-index:3;transform:scaleX(0.965)">Name</span>
<svg class="abs" style="left:364.6px;top:344px;z-index:3" width="7" height="8"><path d="M0.6,3.3 L3.2,0.6 L5.8,3.3Z M0.6,4.5 L3.2,7.2 L5.8,4.5Z" fill="#bcbcbc"/></svg>
<span class="t" style="left:12.1px;top:361.4px;font-size:7.5px;color:#151515;z-index:3;-webkit-text-stroke:0.15px #151515;transform:scaleX(0.952)">78416551</span>
<span class="t" style="left:339.9px;top:361.4px;font-size:7.5px;color:#151515;z-index:3;-webkit-text-stroke:0.15px #151515;transform:scaleX(0.93)">Zone 5</span>
<span class="t" style="left:12.1px;top:380.0px;font-size:7.5px;color:#151515;z-index:3;-webkit-text-stroke:0.15px #151515;transform:scaleX(0.957)">468761561</span>
<span class="t" style="left:339.9px;top:380.0px;font-size:7.5px;color:#151515;z-index:3;-webkit-text-stroke:0.15px #151515;transform:scaleX(0.93)">Zone 2</span>
<svg class="abs" style="left:979px;top:364px;z-index:3" width="10" height="3"><circle cx="1.3" cy="1.5" r="0.95" fill="#555"/><circle cx="4.6" cy="1.5" r="0.95" fill="#555"/><circle cx="7.9" cy="1.5" r="0.95" fill="#555"/></svg>
<svg class="abs" style="left:979px;top:382px;z-index:3" width="10" height="3"><circle cx="1.3" cy="1.5" r="0.95" fill="#555"/><circle cx="4.6" cy="1.5" r="0.95" fill="#555"/><circle cx="7.9" cy="1.5" r="0.95" fill="#555"/></svg>

</body></html>
